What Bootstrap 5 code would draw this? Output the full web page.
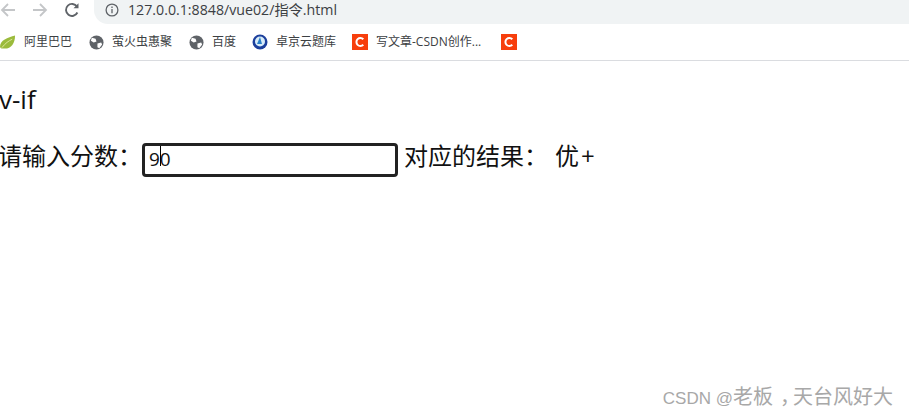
<!DOCTYPE html>
<html lang="zh">
<head>
  <meta charset="UTF-8" />
  <title>指令</title>
  <link href="https://cdn.jsdelivr.net/npm/bootstrap@5.3.3/dist/css/bootstrap.min.css" rel="stylesheet" />
  <style>
    html, body {
      height: 100%;
      margin: 0;
      overflow: hidden;
      background: #fff;
      font-family: "Open Sans", "Noto Sans CJK SC", sans-serif;
    }
    .toolbar {
      height: 24px;
      overflow: hidden;
    }
    .nav-btns {
      width: 94px;
      padding-bottom: 4px;
      gap: 16px;
    }
    .address {
      flex: 1;
      height: 24px;
      background: #f0f3f4;
      border-radius: 0 0 0 14px;
      padding: 0 0 4px 11px;
      gap: 9px;
      font-size: 14.2px;
      color: #3c4043;
    }
    .bookmarks {
      height: 37px;
      border-bottom: 1px solid #dadce0;
      font-size: 12px;
      color: #3c4043;
    }
    .mark-item {
      gap: 8px;
      white-space: nowrap;
    }
    .page-body {
      color: #111;
      font-size: 24px;
      margin-left: -2px;
    }
    .page-title {
      font-size: 26px;
      line-height: 30px;
      margin: 23px 0 25px 1px;
      font-weight: 400;
    }
    .score-row {
      height: 34px;
    }
    .score-wrap {
      position: relative;
      width: 256px;
      height: 34px;
      margin: 0 6px 0 0;
    }
    .score-input {
      width: 100%;
      height: 100%;
      border: 3px solid #222;
      border-radius: 4px;
      padding: 0 4px 2px;
      font-size: 19px;
      font-family: "Open Sans", sans-serif;
      color: #111;
      outline: 0;
    }
    .caret-mark {
      position: absolute;
      left: 18px;
      top: 7px;
      width: 1px;
      height: 20px;
      background: #000;
    }
    .result-val {
      margin-left: 7px;
      letter-spacing: 2px;
    }
    .watermark {
      position: absolute;
      right: 16px;
      bottom: 5px;
      font-size: 20px;
      font-family: "Noto Sans CJK SC", sans-serif;
      color: #a8a8a8;
      white-space: nowrap;
    }
    .watermark-latin {
      font-family: "Liberation Sans", sans-serif;
      font-size: 17px;
    }
    .watermark-comma {
      padding-left: 7px;
      letter-spacing: -7px;
    }
  </style>
</head>
<body>
  <div class="toolbar d-flex align-items-center">
    <div class="nav-btns d-flex align-items-center">
      <svg width="16" height="16" viewBox="0 0 16 16" fill="none" stroke="#c4c6c8" stroke-width="1.8"><path d="M15 8H2M8 2 2 8l6 6"/></svg>
      <svg width="16" height="16" viewBox="0 0 16 16" fill="none" stroke="#c4c6c8" stroke-width="1.8"><path d="M1 8h13M8 2l6 6-6 6"/></svg>
      <svg width="16" height="16" viewBox="0 0 16 16" fill="none" stroke="#5f6368" stroke-width="1.9"><path d="M13.4 10.5A6 6 0 1 1 13 4.6"/><path d="M14.5 1.2v5h-5z" fill="#5f6368" stroke="none"/></svg>
    </div>
    <div class="address d-flex align-items-center">
      <svg width="14" height="14" viewBox="0 0 14 14" fill="none" stroke="#5f6368" stroke-width="1.3"><circle cx="7" cy="7" r="5.9"/><path d="M7 6v4.2M7 3.6v1.4"/></svg>
      <span>127.0.0.1:8848/vue02/指令.html</span>
    </div>
  </div>

  <div class="bookmarks d-flex align-items-center">
    <div class="mark-item d-flex align-items-center" style="width:89px">
      <svg width="16" height="16" viewBox="0 0 17 16"><path d="M0 13C0 6 8 3 16 1c0 8-4 14-11 14-2 0-5 0-5-2z" fill="#9bbb3c"/><path d="M2 14C6 9 9 7 13 5" stroke="#e0e8a0" fill="none"/></svg>
      <span>阿里巴巴</span>
    </div>
    <div class="mark-item d-flex align-items-center" style="width:100px">
      <svg width="15" height="15" viewBox="0 0 16 16"><circle cx="8" cy="8" r="7.5" fill="#5f6368"/><path d="M3 3l4 1 1 3-3 1-3-2zM9 9l4-1 1 2-3 4-2-1z" fill="#fff"/></svg>
      <span>萤火虫惠聚</span>
    </div>
    <div class="mark-item d-flex align-items-center" style="width:63px">
      <svg width="15" height="15" viewBox="0 0 16 16"><circle cx="8" cy="8" r="7.5" fill="#5f6368"/><path d="M3 3l4 1 1 3-3 1-3-2zM9 9l4-1 1 2-3 4-2-1z" fill="#fff"/></svg>
      <span>百度</span>
    </div>
    <div class="mark-item d-flex align-items-center" style="width:100px">
      <svg width="16" height="16" viewBox="0 0 16 16"><circle cx="8" cy="8" r="7.5" fill="#1c3f9c"/><circle cx="8" cy="7.5" r="5" fill="#d8ecf8"/><path d="M8 3 5 10h5z" fill="#2a7fc9"/></svg>
      <span>卓京云题库</span>
    </div>
    <div class="mark-item d-flex align-items-center" style="width:149px">
      <svg width="16" height="16" viewBox="0 0 16 16"><rect width="16" height="16" fill="#f73e0c"/><path d="M11.3 5.2A4 4 0 1 0 11.3 10.8" fill="none" stroke="#fff" stroke-width="2"/></svg>
      <span>写文章-CSDN创作...</span>
    </div>
    <svg width="16" height="16" viewBox="0 0 16 16"><rect width="16" height="16" fill="#f73e0c"/><path d="M11.3 5.2A4 4 0 1 0 11.3 10.8" fill="none" stroke="#fff" stroke-width="2"/></svg>
  </div>

  <div class="page-body">
    <p class="page-title">v-if</p>
    <div class="score-row d-flex align-items-center">
      <span>请输入分数：</span>
      <div class="score-wrap">
        <input class="score-input" type="text" value="90" />
        <span class="caret-mark"></span>
      </div>
      <span>对应的结果：</span>
      <span class="result-val">优+</span>
    </div>
  </div>

  <div class="watermark"><span class="watermark-latin">CSDN @</span>老板<span class="watermark-comma">，</span>天台风好大</div>

  <script src="https://cdn.jsdelivr.net/npm/bootstrap@5.3.3/dist/js/bootstrap.bundle.min.js"></script>
</body>
</html>
